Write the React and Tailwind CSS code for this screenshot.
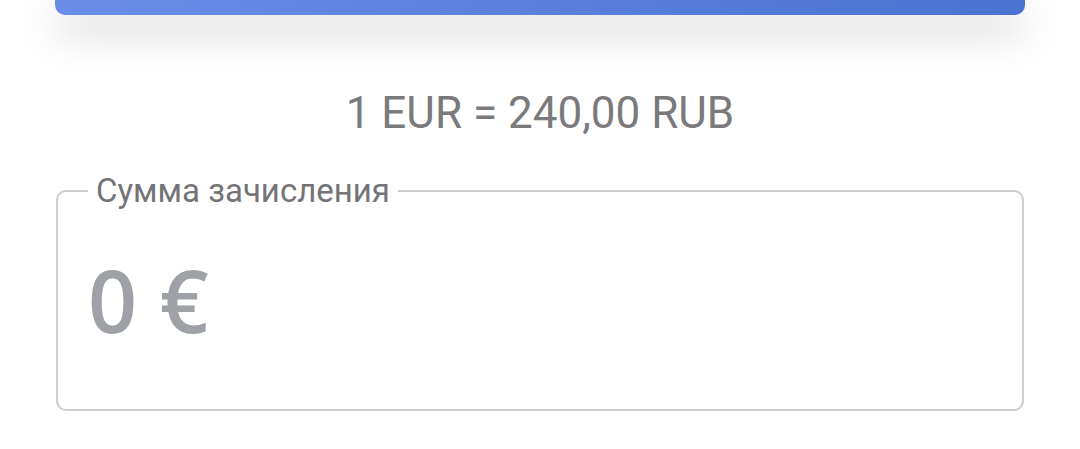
export default function App() {
    return (
        <div className="w-[1080px] h-[449px] bg-white overflow-hidden" style={{ fontFamily: 'Roboto, "Noto Sans", sans-serif' }}>
            {/* top button edge */}
            <div className="mx-[55px] h-[15px] rounded-b-[10px] bg-gradient-to-r from-[#6a8ee8] to-[#4a72d0] shadow-[0_16px_40px_rgba(0,0,0,0.24)]" />

            <div className="pt-[72px] text-center text-[44px] leading-[52px] text-[#7a7a7c]">
                1 EUR = 240,00 RUB
            </div>

            <fieldset className="mx-[56px] mt-[34px] h-[238px] border-2 border-[#cdcdcd] rounded-[10px] px-[30px]">
                <legend className="px-[8px] text-[33px] leading-[36px] text-[#747476]">Сумма зачисления</legend>
                <div className="mt-[46px] text-[86px] leading-[90px] font-semibold text-[#9ea1a6]" style={{ fontFamily: '"Open Sans", sans-serif' }}>
                    0 €
                </div>
            </fieldset>
        </div>
    );
}
